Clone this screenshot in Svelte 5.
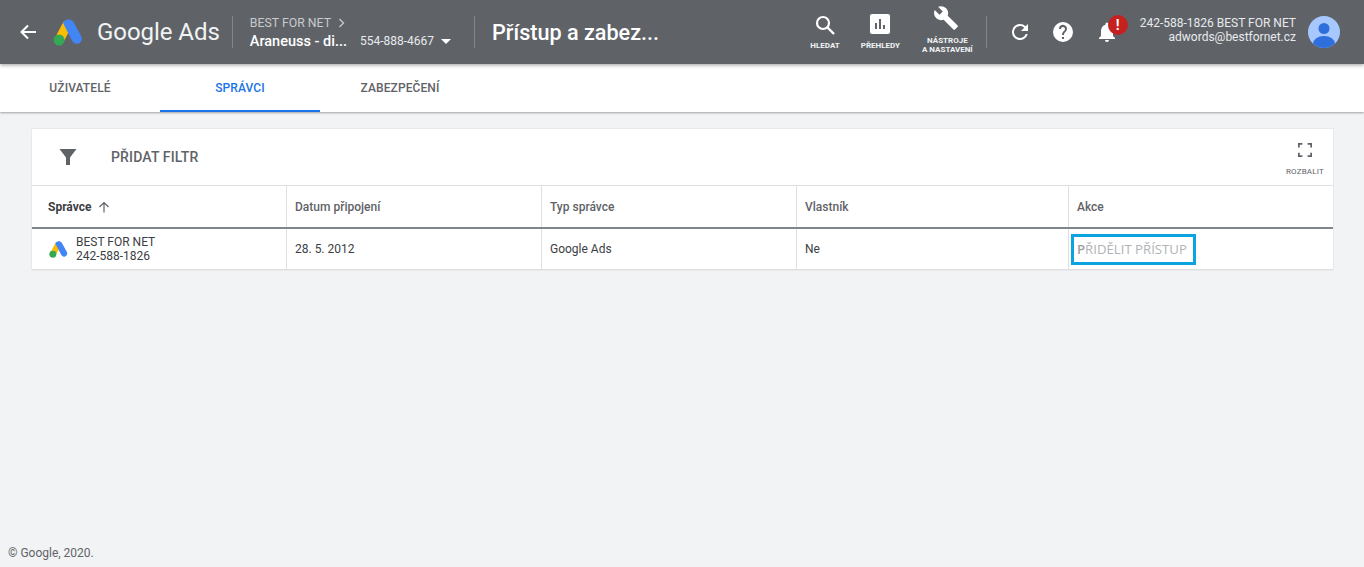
<script>
    const tabs = [
        { label: 'UŽIVATELÉ', width: 160 },
        { label: 'SPRÁVCI', width: 160, active: true },
        { label: 'ZABEZPEČENÍ', width: 160 }
    ];
    const columns = ['Datum připojení', 'Typ správce', 'Vlastník', 'Akce'];
</script>

<div class="page">
    <header class="topbar">
        <svg class="back" width="20" height="20" viewBox="0 0 20 20"><path d="M18 10H4M10 3.500 3.500 10l6.500 6.500" fill="none" stroke="#fff" stroke-width="2"/></svg>
        <svg class="logo" width="30" height="27" viewBox="0 0 30 27">
            <path d="M10.500 2.500 1.500 20l8.500 4 8-15.500z" fill="#fbbc04"/>
            <path d="M15.500 0.500c-3 0-5 2-5.500 3.500L19 21.500c1.200 2.600 4 4 6.500 3 3-1.200 4.200-4.400 2.800-7.100L20.500 3c-1-1.600-3-2.500-5-2.500z" fill="#4285f4"/>
            <circle cx="6" cy="21" r="5.500" fill="#34a853"/>
        </svg>
        <span class="brand">Google Ads</span>
        <div class="sep"></div>
        <div class="account">
            <div class="acc-top">BEST FOR NET <svg width="8" height="10" viewBox="0 0 8 10"><path d="M1.500 1 5.500 5l-4 4" fill="none" stroke="#c8cacd" stroke-width="1.300"/></svg></div>
            <div class="acc-bottom"><b>Araneuss - di...</b><span>554-888-4667</span><i class="caret"></i></div>
        </div>
        <div class="sep second"></div>
        <div class="title">Přístup a zabez...</div>

        <div class="tools">
            <div class="tool search">
                <svg width="24" height="24" viewBox="0 0 24 24"><circle cx="10" cy="10" r="6" fill="none" stroke="#fff" stroke-width="2.200"/><path d="m14.500 14.500 6.500 6.500" stroke="#fff" stroke-width="2.400"/></svg>
                <span>HLEDAT</span>
            </div>
            <div class="tool reports">
                <svg width="20" height="20" viewBox="0 0 20 20"><rect width="20" height="20" rx="2" fill="#fff"/><path d="M5 9h2v6H5zM9 5h2v10H9zM13 11h2v4h-2z" fill="#5f6368"/></svg>
                <span>PŘEHLEDY</span>
            </div>
            <div class="tool wrench">
                <svg width="26" height="26" viewBox="0 0 24 24"><path d="M22.700 19 13.600 9.900c.9-2.300.4-5-1.500-6.900-2-2-5-2.400-7.400-1.300L9 6 6 9 1.600 4.700C.4 7.100.9 10.100 2.900 12.100c1.900 1.900 4.600 2.400 6.900 1.500l9.100 9.100c.4.400 1 .4 1.400 0l2.300-2.300c.5-.4.500-1.100.1-1.400z" fill="#fff"/></svg>
                <span>NÁSTROJE<br>A NASTAVENÍ</span>
            </div>
        </div>
        <div class="sep third"></div>
        <svg class="refresh" width="24" height="24" viewBox="0 0 24 24"><path d="M17.650 6.350A7.960 7.960 0 0 0 12 4a8 8 0 1 0 7.730 10h-2.080A6 6 0 1 1 12 6c1.660 0 3.140.69 4.220 1.780L13 11h7V4z" fill="#fff"/></svg>
        <svg class="help" width="24" height="24" viewBox="0 0 24 24"><path d="M12 2a10 10 0 1 0 0 20 10 10 0 0 0 0-20zm1 17h-2v-2h2zm2.070-7.750-.9.920C13.450 12.900 13 13.500 13 15h-2v-.5c0-1.100.45-2.100 1.170-2.830l1.240-1.260A2 2 0 1 0 10 9H8a4 4 0 1 1 7.070 2.250z" fill="#fff"/></svg>
        <div class="bell">
            <svg width="24" height="24" viewBox="0 0 24 24"><path d="M12 22a2 2 0 0 0 2-2h-4a2 2 0 0 0 2 2zm6-6v-5c0-3.070-1.630-5.640-4.500-6.320V4a1.500 1.500 0 0 0-3 0v.68C7.640 5.360 6 7.920 6 11v5l-2 2v1h16v-1z" fill="#fff"/></svg>
            <span class="badge">!</span>
        </div>
        <div class="user">
            <div>242-588-1826 BEST FOR NET</div>
            <div>adwords@bestfornet.cz</div>
        </div>
        <svg class="avatar" width="32" height="32" viewBox="0 0 32 32">
            <defs><clipPath id="av"><circle cx="16" cy="16" r="16"/></clipPath></defs>
            <circle cx="16" cy="16" r="16" fill="#a6c8ff"/>
            <g clip-path="url(#av)"><circle cx="16" cy="12.500" r="5.500" fill="#2f6fdb"/><ellipse cx="16" cy="28" rx="11" ry="8" fill="#2f6fdb"/></g>
        </svg>
    </header>

    <nav class="tabs">
        {#each tabs as tab}
            <div class="tab" class:active={tab.active} style="width: {tab.width}px">{tab.label}</div>
        {/each}
    </nav>

    <main class="card">
        <div class="toolbar">
            <svg class="funnel" width="18" height="18" viewBox="0 0 18 18"><path d="M0.500 1h17L11 9.500V17H7V9.500z" fill="#5f6368"/></svg>
            <span class="add-filter">PŘIDAT FILTR</span>
            <div class="expand">
                <svg width="14" height="14" viewBox="0 0 16 16"><path d="M1 5V1h4M11 1h4v4M15 11v4h-4M5 15H1v-4" fill="none" stroke="#5f6368" stroke-width="2"/></svg>
                <span>ROZBALIT</span>
            </div>
        </div>
        <div class="row head">
            <div class="cell first sorted">Správce
                <svg width="12" height="12" viewBox="0 0 12 12"><path d="M6 11.500V1.500M1.500 6 6 1.500 10.500 6" fill="none" stroke="#5f6368" stroke-width="1.200"/></svg>
            </div>
            {#each columns as col}
                <div class="cell">{col}</div>
            {/each}
        </div>
        <div class="row body">
            <div class="cell first manager">
                <svg width="19" height="17" viewBox="0 0 30 27">
                    <path d="M10.500 2.500 1.500 20l8.500 4 8-15.500z" fill="#fbbc04"/>
                    <path d="M15.500 0.500c-3 0-5 2-5.500 3.500L19 21.500c1.200 2.600 4 4 6.500 3 3-1.200 4.200-4.400 2.800-7.100L20.500 3c-1-1.600-3-2.500-5-2.500z" fill="#4285f4"/>
                    <circle cx="6" cy="21" r="5.500" fill="#34a853"/>
                </svg>
                <div class="name">BEST FOR NET<br>242-588-1826</div>
            </div>
            <div class="cell">28. 5. 2012</div>
            <div class="cell">Google Ads</div>
            <div class="cell">Ne</div>
            <div class="cell action"><span class="grant">PŘIDĚLIT PŘÍSTUP</span></div>
        </div>
    </main>

    <footer>© Google, 2020.</footer>
</div>

<style>
    :global(body) {
        margin: 0;
    }

    .page {
        position: relative;
        height: 567px;
        overflow: hidden;
        background: #f1f3f4;
        font-family: Roboto, "Liberation Sans", sans-serif;
        color: #3c4043;
    }

    .topbar {
        position: relative;
        z-index: 2;
        display: flex;
        align-items: center;
        height: 64px;
        background: #5f6368;
        color: #fff;
        box-shadow: 0 1px 4px rgba(0, 0, 0, .4);
    }

    .back {
        margin-left: 18px;
    }

    .logo {
        margin-left: 15px;
    }

    .brand {
        margin-left: 14px;
        font-size: 24px;
        letter-spacing: -.05px;
        color: #f1f3f4;
    }

    .sep {
        width: 1px;
        height: 32px;
        margin-left: 12px;
        background: #80868b;
    }

    .sep.second {
        margin-left: 23px;
    }

    .sep.third {
        margin-left: 13px;
    }

    .account {
        margin-left: 17px;
    }

    .acc-top {
        display: flex;
        align-items: center;
        gap: 7px;
        margin-top: 1px;
        font-size: 12.300px;
        line-height: 15px;
        color: #c8cacd;
    }

    .acc-bottom {
        display: flex;
        align-items: center;
        margin-top: 2px;
        line-height: 17px;
    }

    .acc-bottom b {
        font-size: 14.500px;
        font-weight: 500;
    }

    .acc-bottom span {
        margin-left: 13px;
        font-size: 12px;
        color: #e8eaed;
    }

    .caret {
        width: 0;
        height: 0;
        margin-left: 7px;
        border: 5px solid transparent;
        border-top: 5px solid #fff;
        border-bottom: 0;
    }

    .title {
        margin-left: 17px;
        font-size: 21.600px;
        font-weight: 500;
    }

    .tools {
        display: flex;
        align-items: flex-start;
        margin-left: auto;
        height: 64px;
    }

    .tool {
        display: flex;
        flex-direction: column;
        align-items: center;
        font-size: 8px;
        font-weight: 700;
        line-height: 9px;
        text-align: center;
        color: #f1f3f4;
    }

    .tool span {
        display: block;
    }

    .search {
        margin-top: 13px;
    }

    .search span {
        margin-top: 4px;
    }

    .reports {
        margin: 14px 0 0 21px;
    }

    .reports span {
        margin-top: 7px;
    }

    .wrench {
        margin: 5px 0 0 22px;
    }

    .wrench svg {
        margin-right: 3px;
    }

    .wrench span {
        margin-top: 5px;
    }

    .refresh {
        margin-left: 21px;
    }

    .help {
        margin-left: 19px;
    }

    .bell {
        position: relative;
        width: 24px;
        height: 24px;
        margin-left: 20px;
    }

    .badge {
        position: absolute;
        top: -5px;
        left: 13px;
        width: 20px;
        height: 20px;
        border-radius: 50%;
        background: #c5221f;
        font-size: 14px;
        font-weight: 700;
        line-height: 20px;
        text-align: center;
    }

    .user {
        margin-left: 21px;
        padding-bottom: 4px;
        font-size: 12px;
        line-height: 14px;
        text-align: right;
        color: #e8eaed;
    }

    .avatar {
        margin: 0 24px 0 12px;
    }

    .tabs {
        display: flex;
        height: 48px;
        background: #fff;
        box-shadow: 0 1px 2px rgba(60, 64, 67, .45);
    }

    .tab {
        box-sizing: border-box;
        height: 48px;
        font-size: 12px;
        font-weight: 500;
        letter-spacing: .1px;
        line-height: 48px;
        text-align: center;
        color: #5f6368;
    }

    .tab.active {
        border-bottom: 2px solid #1a73e8;
        color: #1a73e8;
    }

    .card {
        display: flex;
        flex-direction: column;
        width: 1301px;
        margin: 17px 0 0 32px;
        background: #fff;
        box-shadow: 0 0 1px rgba(60, 64, 67, .3);
    }

    .toolbar {
        display: flex;
        align-items: center;
        height: 56px;
        border-bottom: 1px solid #e0e0e0;
    }

    .funnel {
        margin-left: 27px;
    }

    .add-filter {
        margin-left: 34px;
        font-size: 14px;
        font-weight: 500;
        letter-spacing: .15px;
        color: #5f6368;
    }

    .expand {
        display: flex;
        flex-direction: column;
        align-items: center;
        margin-left: auto;
        padding: 5px 9px 0 0;
        font-size: 8px;
        letter-spacing: .2px;
        color: #5f6368;
    }

    .expand span {
        margin-top: 10px;
    }

    .row {
        display: grid;
        grid-template-columns: 255px 255px 255px 272px 264px;
    }

    .row.head {
        height: 41px;
        border-bottom: 2px solid #80868b;
        font-size: 12px;
        font-weight: 500;
        color: #5f6368;
    }

    .row.body {
        height: 40px;
        border-bottom: 1px solid #e0e0e0;
        font-size: 12px;
        color: #3c4043;
    }

    .cell {
        display: flex;
        align-items: center;
        padding-left: 8px;
        border-right: 1px solid #e0e0e0;
    }

    .cell:last-child {
        border-right: 0;
    }

    .cell.first {
        padding-left: 16px;
    }

    .sorted {
        gap: 7px;
        font-weight: 700;
        color: #3c4043;
    }

    .manager {
        gap: 8px;
    }

    .manager svg {
        margin-left: 1px;
    }

    .name {
        line-height: 14px;
    }

    .action {
        padding-left: 2px;
    }

    .grant {
        display: block;
        box-sizing: border-box;
        width: 125px;
        height: 31px;
        padding-left: 3px;
        border: 3px solid #0ba3e0;
        font-family: "Open Sans", sans-serif;
        font-size: 13.200px;
        line-height: 25px;
        color: #b0b3b6;
    }

    .grant::first-letter {
        font-weight: 600;
        color: #9aa0a6;
    }

    footer {
        position: absolute;
        left: 8px;
        bottom: 7px;
        font-size: 12px;
        color: #5f6368;
    }
</style>
